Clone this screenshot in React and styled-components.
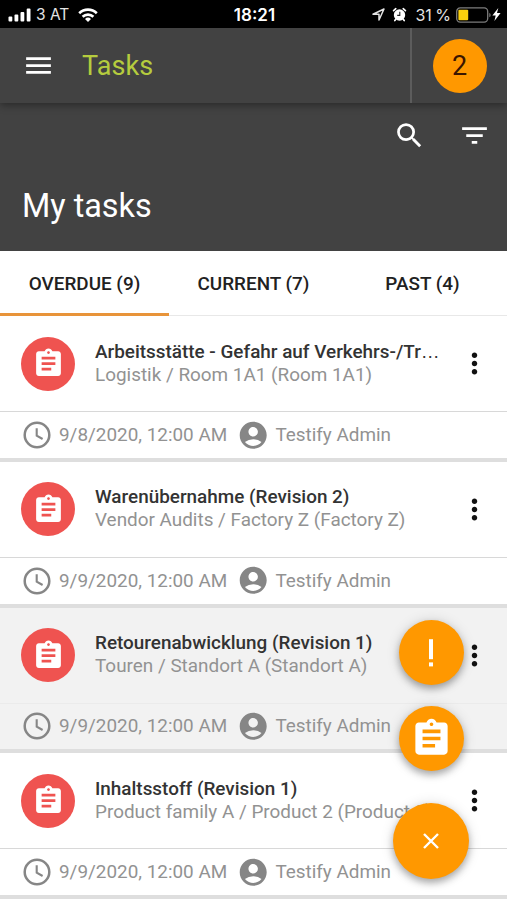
import React, { useState } from 'react'

import { styled, createGlobalStyle, ThemeProvider } from 'styled-components'
import {
    MdMenu, MdSearch, MdFilterList, MdAssignment, MdMoreVert,
    MdAccountCircle
} from 'react-icons/md'

const theme = {
    dark: '#424242',
    accent: '#ff9800',
    lime: '#b5cc3e',
    red: '#ef5350',
    text: '#333',
    text_secondary: '#929292',
}

const GlobalStyle = createGlobalStyle`
    * {
        box-sizing: border-box;
    }
    body {
        margin: 0;
        overflow: hidden;
        background: #fff;
        font-family: Roboto, sans-serif;
    }
    svg {
        display: block;
        flex-shrink: 0;
    }
`

const Page = styled.div`
    position: relative;
    width: 507px;
    height: 900px;
    overflow: hidden;
    background: #fff;
`

const StatusBar = styled.div`
    display: grid;
    grid-template-columns: 1fr auto 1fr;
    align-items: center;
    height: 28px;
    padding: 1px 6px 0 8px;
    background: #000;
    color: #e4e4e4;
    font-family: Inter, sans-serif;
    font-size: 15.5px;
`
const StatusGroup = styled.div`
    display: flex;
    align-items: center;
    justify-content: ${props => props.$end ? 'flex-end' : 'flex-start'};
`
const Carrier = styled.span`
    margin: 0 9px 0 4px;
`
const Clock = styled.span`
    font-weight: 600;
    font-size: 17px;
    color: #fff;
`
const Percent = styled.span`
    margin: 0 5px 0 8px;
    font-size: 16px;
    word-spacing: -1px;
`
const AlarmSlot = styled.div`
    margin-left: 7px;
`

const AppBar = styled.header`
    position: relative;
    z-index: 1;
    display: flex;
    align-items: center;
    height: 75px;
    padding-left: 22px;
    background: ${props => props.theme.dark};
    color: #fff;
    box-shadow: 0 2px 8px rgba(0, 0, 0, 0.4);
`
const AppTitle = styled.h1`
    flex: 1;
    margin: 0 0 0 27px;
    font-size: 27px;
    font-weight: 400;
    letter-spacing: 0.1px;
    color: ${props => props.theme.lime};
`
const UserArea = styled.div`
    display: flex;
    align-items: center;
    justify-content: center;
    width: 97px;
    height: 100%;
    border-left: 2px solid #5c5c5c;
`
const Count = styled.div`
    display: flex;
    align-items: center;
    justify-content: center;
    width: 54px;
    height: 54px;
    border-radius: 50%;
    background: ${props => props.theme.accent};
    color: #3a1500;
    font-size: 27px;
`

const Header = styled.section`
    display: flex;
    flex-direction: column;
    justify-content: space-between;
    height: 148px;
    padding: 16px 16px 25px 22px;
    background: ${props => props.theme.dark};
    color: #fff;
`
const Actions = styled.div`
    display: flex;
    justify-content: flex-end;
    gap: 32px;
`
const Heading = styled.h2`
    margin: 0;
    font-size: 32.4px;
    line-height: 40px;
    font-weight: 400;
`

const Tabs = styled.nav`
    display: grid;
    grid-template-columns: repeat(3, 1fr);
    height: 65px;
    border-bottom: 1px solid #e8e8e8;
`
const Tab = styled.button`
    height: 65px;
    padding: 2px 0 0;
    border: none;
    border-bottom: 3px solid ${props => props.$active ? '#e8943a' : 'transparent'};
    background: none;
    font-family: inherit;
    font-size: 18.9px;
    font-weight: 500;
    color: #212121;
`

const Task = styled.article`
    height: 145.75px;
    border-bottom: 4px solid #dedede;
    background: ${props => props.$selected ? '#f2f2f2' : '#fff'};
`
const TaskMain = styled.div`
    display: flex;
    align-items: center;
    height: 95px;
    padding: 0 16px 0 21px;
`
const Avatar = styled.div`
    display: flex;
    align-items: center;
    justify-content: center;
    flex-shrink: 0;
    width: 54px;
    height: 54px;
    border-radius: 50%;
    background: ${props => props.theme.red};
    color: #fff;
`
const TaskText = styled.div`
    flex: 1;
    min-width: 0;
    margin: 0 14px 0 20px;
    padding-bottom: 2px;
    font-size: 18.9px;
    line-height: 23px;
    white-space: nowrap;
`
const TaskTitle = styled.div`
    font-weight: 500;
    color: ${props => props.theme.text};
`
const Dots = styled.span`
    font-family: "Liberation Sans", sans-serif;
    font-weight: 400;
    line-height: 1;
`
const TaskPlace = styled.div`
    color: ${props => props.theme.text_secondary};
`
const TaskMeta = styled.div`
    display: flex;
    align-items: center;
    height: 46.75px;
    padding-left: 21px;
    border-top: 1px solid ${props => props.$selected ? '#ebebeb' : '#d8d8d8'};
    font-size: 18.9px;
    color: ${props => props.theme.text_secondary};
    svg {
        color: #868686;
    }
`
const MetaText = styled.span`
    width: ${props => props.$width || 'auto'};
    margin: 0 10px 0 6px;
    padding-bottom: 1px;
    white-space: nowrap;
`

const FabStack = styled.div`
    position: absolute;
    top: 620px;
    right: 38px;
    display: flex;
    flex-direction: column;
    align-items: center;
`
const Fab = styled.button`
    display: flex;
    align-items: center;
    justify-content: center;
    width: ${props => props.$size}px;
    height: ${props => props.$size}px;
    margin: 0 0 ${props => props.$gap || 0}px;
    padding: 0;
    border: none;
    border-radius: 50%;
    background: ${props => props.theme.accent};
    color: #fff;
    box-shadow: 0 4px 7px rgba(0, 0, 0, 0.28), 0 1px 14px rgba(0, 0, 0, 0.14);
`

const tabs = ['OVERDUE (9)', 'CURRENT (7)', 'PAST (4)']

const tasks = [
    { title: 'Arbeitsstätte - Gefahr auf Verkehrs-/Tr', more: true, place: 'Logistik / Room 1A1 (Room 1A1)', date: '9/8/2020, 12:00 AM' },
    { title: 'Warenübernahme (Revision 2)', place: 'Vendor Audits / Factory Z (Factory Z)', date: '9/9/2020, 12:00 AM' },
    { title: 'Retourenabwicklung (Revision 1)', place: 'Touren / Standort A (Standort A)', date: '9/9/2020, 12:00 AM', selected: true },
    { title: 'Inhaltsstoff (Revision 1)', place: 'Product family A / Product 2 (Product 2)', date: '9/9/2020, 12:00 AM' },
]

const Signal = () => (
    <svg width="24" height="14" viewBox="0 0 24 14" fill="#fff">
        <rect x="0.5" y="8.5" width="3.8" height="5" rx="1" />
        <rect x="6.5" y="6.5" width="3.8" height="7" rx="1" />
        <rect x="12.5" y="4" width="3.8" height="9.5" rx="1" />
        <rect x="18.7" y="0.5" width="3.8" height="13" rx="1" />
    </svg>
)

const Wifi = () => (
    <svg width="20" height="14" viewBox="0 0 20 14" fill="none" stroke="#fff" strokeWidth="2.6">
        <path d="M1.2 5.2a12.6 12.6 0 0 1 17.6 0" />
        <path d="M4.6 8.8a7.8 7.8 0 0 1 10.8 0" />
        <path d="M10 14l-3-3a4.3 4.3 0 0 1 6 0z" fill="#fff" stroke="none" />
    </svg>
)

const Location = () => (
    <svg width="13" height="13" viewBox="0 0 13 13" fill="none" stroke="#e4e4e4" strokeWidth="1.5" strokeLinejoin="round">
        <path d="M1 6.2L12 1 7 12V6.2z" />
    </svg>
)

const Alarm = () => (
    <svg width="15" height="15" viewBox="0 0 15 15">
        <circle cx="7.5" cy="8" r="5.7" fill="#fff" />
        <path d="M1.6 3.6L3.8 1.7M13.4 3.6L11.2 1.7M3.8 12.2l-1 1.4M11.2 12.2l1 1.4" stroke="#fff" strokeWidth="1.7" strokeLinecap="round" />
        <path d="M7.8 4.8v3.6H5.2" fill="none" stroke="#222" strokeWidth="1.1" />
    </svg>
)

const Battery = () => (
    <svg width="36" height="16" viewBox="0 0 36 16">
        <rect x="0.7" y="0.9" width="31" height="14.2" rx="3.5" fill="none" stroke="#7d7d7d" strokeWidth="1.3" />
        <rect x="2.4" y="2.7" width="9.8" height="10.6" rx="1" fill="#fbd00d" />
        <path d="M33.3 5.7c1.8.8 1.8 3.8 0 4.6z" fill="#7d7d7d" />
    </svg>
)

const Bolt = () => (
    <svg width="9" height="13" viewBox="0 0 9 13" fill="#fff">
        <path d="M6.3 0L0.4 7.4h3.3L2.4 13l6.2-7.9H5z" />
    </svg>
)

const TimeIcon = () => (
    <svg width="32" height="32" viewBox="0 0 32 32" fill="none" stroke="currentColor">
        <circle cx="16" cy="16" r="12.3" strokeWidth="2.5" />
        <path d="M15.7 9.3v7.4l5.9 3.3" strokeWidth="2.1" />
    </svg>
)

const Exclamation = () => (
    <svg width="8" height="30" viewBox="0 0 8 30" fill="#fff">
        <rect x="2" y="1.2" width="4" height="20" />
        <rect x="2" y="24.4" width="4" height="4" />
    </svg>
)

const Cross = () => (
    <svg width="18" height="18" viewBox="0 0 18 18" stroke="#fff" strokeWidth="2.4">
        <path d="M2 2l14 14M16 2L2 16" />
    </svg>
)

const App = () => {
    const [active, setActive] = useState(0);
  return (
    <ThemeProvider theme={theme}>
        <GlobalStyle />
        <Page>
            <StatusBar>
                <StatusGroup>
                    <Signal />
                    <Carrier>3 AT</Carrier>
                    <Wifi />
                </StatusGroup>
                <Clock>18:21</Clock>
                <StatusGroup $end>
                    <Location />
                    <AlarmSlot><Alarm /></AlarmSlot>
                    <Percent>31 %</Percent>
                    <Battery />
                    <Bolt />
                </StatusGroup>
            </StatusBar>
            <AppBar>
                <MdMenu size={33} />
                <AppTitle>Tasks</AppTitle>
                <UserArea>
                    <Count>2</Count>
                </UserArea>
            </AppBar>
            <Header>
                <Actions>
                    <MdSearch size={33} />
                    <MdFilterList size={33} />
                </Actions>
                <Heading>My tasks</Heading>
            </Header>
            <Tabs>
                {tabs.map((tab, i) => (
                    <Tab key={tab} $active={active === i} onClick={() => setActive(i)}>{tab}</Tab>
                ))}
            </Tabs>
            {tasks.map(task => (
                <Task key={task.title} $selected={task.selected}>
                    <TaskMain>
                        <Avatar><MdAssignment size={33} /></Avatar>
                        <TaskText>
                            <TaskTitle>{task.title}{task.more && <Dots>…</Dots>}</TaskTitle>
                            <TaskPlace>{task.place}</TaskPlace>
                        </TaskText>
                        <MdMoreVert size={33} color="#111" />
                    </TaskMain>
                    <TaskMeta $selected={task.selected}>
                        <TimeIcon />
                        <MetaText $width="168px">{task.date}</MetaText>
                        <MdAccountCircle size={32.4} />
                        <MetaText>Testify Admin</MetaText>
                    </TaskMeta>
                </Task>
            ))}
            <FabStack>
                <Fab $size={65} $gap={21}><Exclamation /></Fab>
                <Fab $size={65} $gap={32}><MdAssignment size={43} /></Fab>
                <Fab $size={76}><Cross /></Fab>
            </FabStack>
        </Page>
    </ThemeProvider>
  )
}

export default App
